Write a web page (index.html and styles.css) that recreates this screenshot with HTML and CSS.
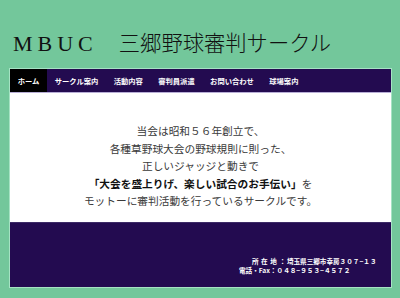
FILE: index.html
```html
<!DOCTYPE html>
<html lang="ja">
<head>
<meta charset="utf-8">
<title>MBUC 三郷野球審判サークル</title>
<link rel="stylesheet" href="styles.css">
</head>
<body>
<div class="page">
  <header class="site-header">
    <h1 class="site-title"><span class="title-latin">MBUC</span><span class="title-ja">三郷野球審判サークル</span></h1>
  </header>
  <div class="frame">
    <nav class="nav">
      <a class="nav-item active" href="#">ホーム</a>
      <a class="nav-item" href="#">サークル案内</a>
      <a class="nav-item" href="#">活動内容</a>
      <a class="nav-item" href="#">審判員派遣</a>
      <a class="nav-item" href="#">お問い合わせ</a>
      <a class="nav-item" href="#">球場案内</a>
    </nav>
    <main class="main">
      <p class="intro">当会は昭和５６年創立で、<br>各種草野球大会の野球規則に則った、<br>正しいジャッジと動きで<br><strong>「大会を盛上りげ、楽しい試合のお手伝い」</strong>を<br>モットーに審判活動を行っているサークルです。</p>
    </main>
    <footer class="footer">
      <div class="contact">
        <div class="contact-line first"><span class="label">所 在 地 ：</span>埼玉県三郷市幸房３０７−１３</div>
        <div class="contact-line">電話・Fax：０４８−９５３−４５７２</div>
      </div>
    </footer>
  </div>
</div>
</body>
</html>
```
FILE: styles.css
```css
html, body {
  margin: 0;
  padding: 0;
}
body {
  background: #73c79b;
  font-family: "Noto Sans CJK JP", "Noto Sans", sans-serif;
}
.page {
  padding: 0 8px 10px 9px;
}
.site-header {
  height: 68px;
  box-sizing: border-box;
  padding: 26px 0 0 4px;
}
.site-title {
  margin: 0;
  font-weight: normal;
  font-size: 22px;
  line-height: 30px;
  color: #111;
  white-space: nowrap;
}
.title-latin {
  font-family: "Liberation Serif", serif;
  letter-spacing: 5px;
  margin-right: 21px;
}
.title-ja {
  font-family: "Noto Sans CJK JP", sans-serif;
  font-weight: 300;
  font-size: 21.3px;
}
.frame {
  border: 1px solid #a6e3c4;
  background: #fff;
}
.nav {
  display: flex;
  background: #230b50;
  height: 23px;
  border-bottom: 1px solid #b8aed6;
}
.nav-item {
  display: flex;
  align-items: center;
  padding: 0 7.7px;
  color: #fff;
  font-size: 7.3px;
  font-weight: bold;
  text-decoration: none;
  white-space: nowrap;
}
.nav-item.active {
  background: #000;
}
.main {
  padding: 29px 0 12px;
  text-align: center;
}
.intro {
  margin: 0;
  font-size: 10.7px;
  line-height: 17.5px;
  color: #3a3a3a;
}
.intro strong {
  color: #111;
}
.footer {
  background: #230b50;
  height: 65px;
  border-top: 1px solid #3c2a66;
  box-sizing: border-box;
  padding-top: 34px;
  display: flex;
}
.contact {
  margin-left: 229px;
  color: #fff;
  font-size: 6.6px;
  font-weight: bold;
  line-height: 9.5px;
  white-space: nowrap;
}
.contact-line.first {
  padding-left: 13px;
}
.label {
  word-spacing: 1px;
  margin-right: 1px;
}
```
